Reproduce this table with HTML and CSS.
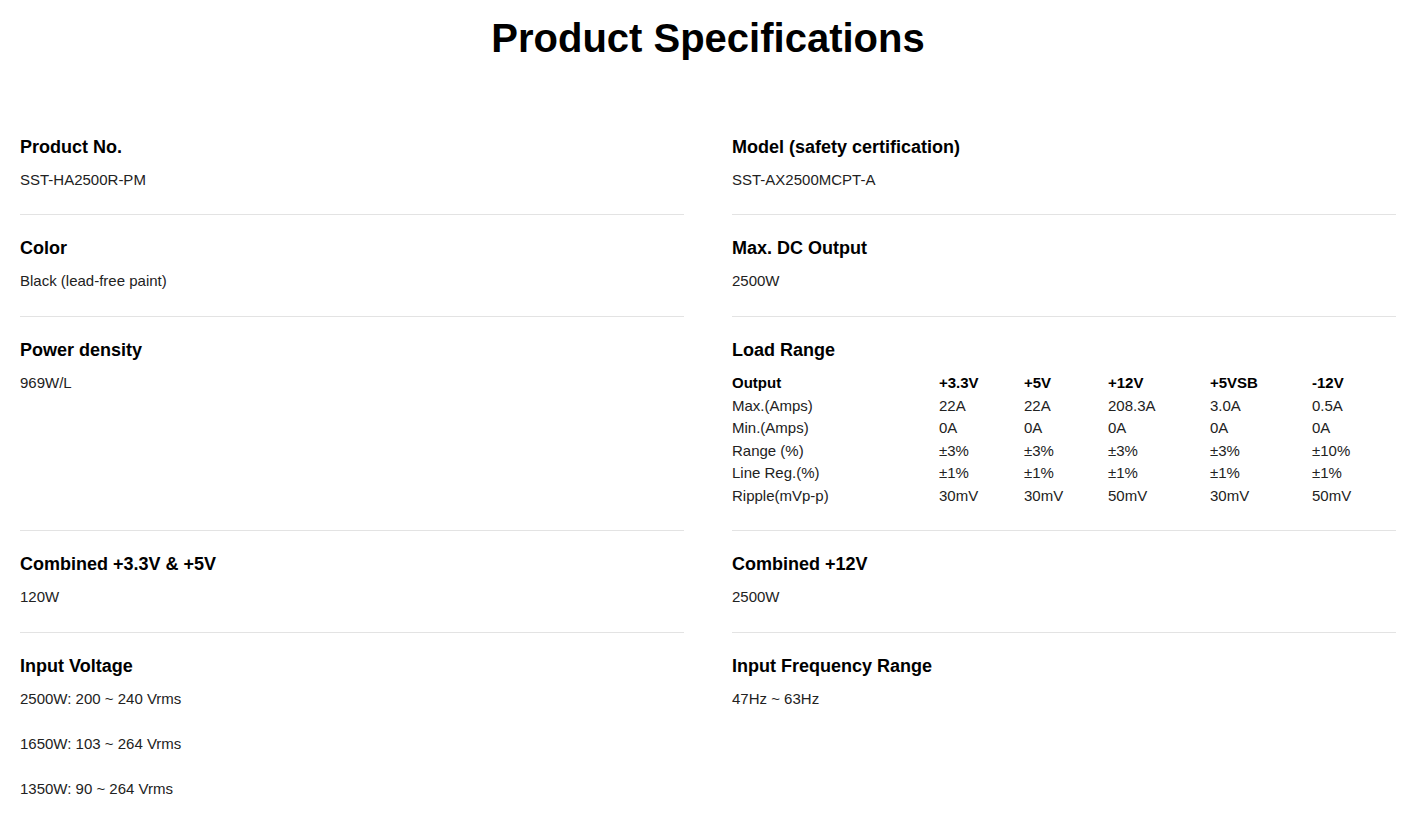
FILE: index.html
```html
<!DOCTYPE html>
<html lang="en">
<head>
<meta charset="utf-8">
<title>Product Specifications</title>
<link rel="stylesheet" href="styles.css">
</head>
<body>
<main class="page">
  <h1 class="title">Product Specifications</h1>
  <div class="specs">
    <div class="spec first">
      <h3 class="label">Product No.</h3>
      <div class="value">SST-HA2500R-PM</div>
    </div>
    <div class="spec first">
      <h3 class="label">Model (safety certification)</h3>
      <div class="value">SST-AX2500MCPT-A</div>
    </div>
    <div class="spec">
      <h3 class="label">Color</h3>
      <div class="value">Black (lead-free paint)</div>
    </div>
    <div class="spec">
      <h3 class="label">Max. DC Output</h3>
      <div class="value">2500W</div>
    </div>
    <div class="spec">
      <h3 class="label">Power density</h3>
      <div class="value">969W/L</div>
    </div>
    <div class="spec">
      <h3 class="label">Load Range</h3>
      <table class="load">
        <colgroup>
          <col class="c1"><col class="c2"><col class="c3"><col class="c4"><col class="c5"><col class="c6">
        </colgroup>
        <tr class="head"><td>Output</td><td>+3.3V</td><td>+5V</td><td>+12V</td><td>+5VSB</td><td>-12V</td></tr>
        <tr><td>Max.(Amps)</td><td>22A</td><td>22A</td><td>208.3A</td><td>3.0A</td><td>0.5A</td></tr>
        <tr><td>Min.(Amps)</td><td>0A</td><td>0A</td><td>0A</td><td>0A</td><td>0A</td></tr>
        <tr><td>Range (%)</td><td>±3%</td><td>±3%</td><td>±3%</td><td>±3%</td><td>±10%</td></tr>
        <tr><td>Line Reg.(%)</td><td>±1%</td><td>±1%</td><td>±1%</td><td>±1%</td><td>±1%</td></tr>
        <tr><td>Ripple(mVp-p)</td><td>30mV</td><td>30mV</td><td>50mV</td><td>30mV</td><td>50mV</td></tr>
      </table>
    </div>
    <div class="spec">
      <h3 class="label">Combined +3.3V &amp; +5V</h3>
      <div class="value">120W</div>
    </div>
    <div class="spec">
      <h3 class="label">Combined +12V</h3>
      <div class="value">2500W</div>
    </div>
    <div class="spec last">
      <h3 class="label">Input Voltage</h3>
      <p class="value para">2500W: 200 ~ 240 Vrms</p>
      <p class="value para">1650W: 103 ~ 264 Vrms</p>
      <p class="value para">1350W: 90 ~ 264 Vrms</p>
    </div>
    <div class="spec last">
      <h3 class="label">Input Frequency Range</h3>
      <div class="value">47Hz ~ 63Hz</div>
    </div>
  </div>
</main>
</body>
</html>
```

FILE: styles.css
```css
* { box-sizing: border-box; }
html, body {
  margin: 0;
  padding: 0;
  background: #ffffff;
}
body {
  font-family: "Liberation Sans", Arial, sans-serif;
  color: #000;
}
.page {
  padding: 13px 16px 0 20px;
}
.title {
  margin: 0;
  text-align: center;
  font-size: 40px;
  line-height: 50px;
  font-weight: 700;
  color: #000;
}
.specs {
  display: grid;
  grid-template-columns: 664px 664px;
  column-gap: 48px;
  margin-top: 73px;
}
.spec {
  padding: 22px 0 25px;
  border-bottom: 1px solid #e3e3e3;
}
.spec.first {
  padding: 0 0 24px;
}
.spec.last {
  border-bottom: none;
}
.label {
  margin: 0 0 12px;
  font-size: 18px;
  line-height: 22px;
  font-weight: 700;
  color: #000;
}
.value {
  font-size: 15px;
  line-height: 20px;
  color: #222;
}
.para {
  margin: 0 0 25px;
}
.para:last-child {
  margin-bottom: 0;
}
.load {
  width: 100%;
  margin: -1px 0 -2px;
  border-collapse: collapse;
  table-layout: fixed;
  font-size: 15px;
  color: #222;
}
.load td {
  padding: 0;
  height: 22.5px;
  line-height: 20px;
  vertical-align: middle;
  white-space: nowrap;
}
.load .head td {
  font-weight: 700;
  color: #000;
}
.c1 { width: 207px; }
.c2 { width: 85px; }
.c3 { width: 84px; }
.c4 { width: 102px; }
.c5 { width: 102px; }
.c6 { width: 84px; }
```
